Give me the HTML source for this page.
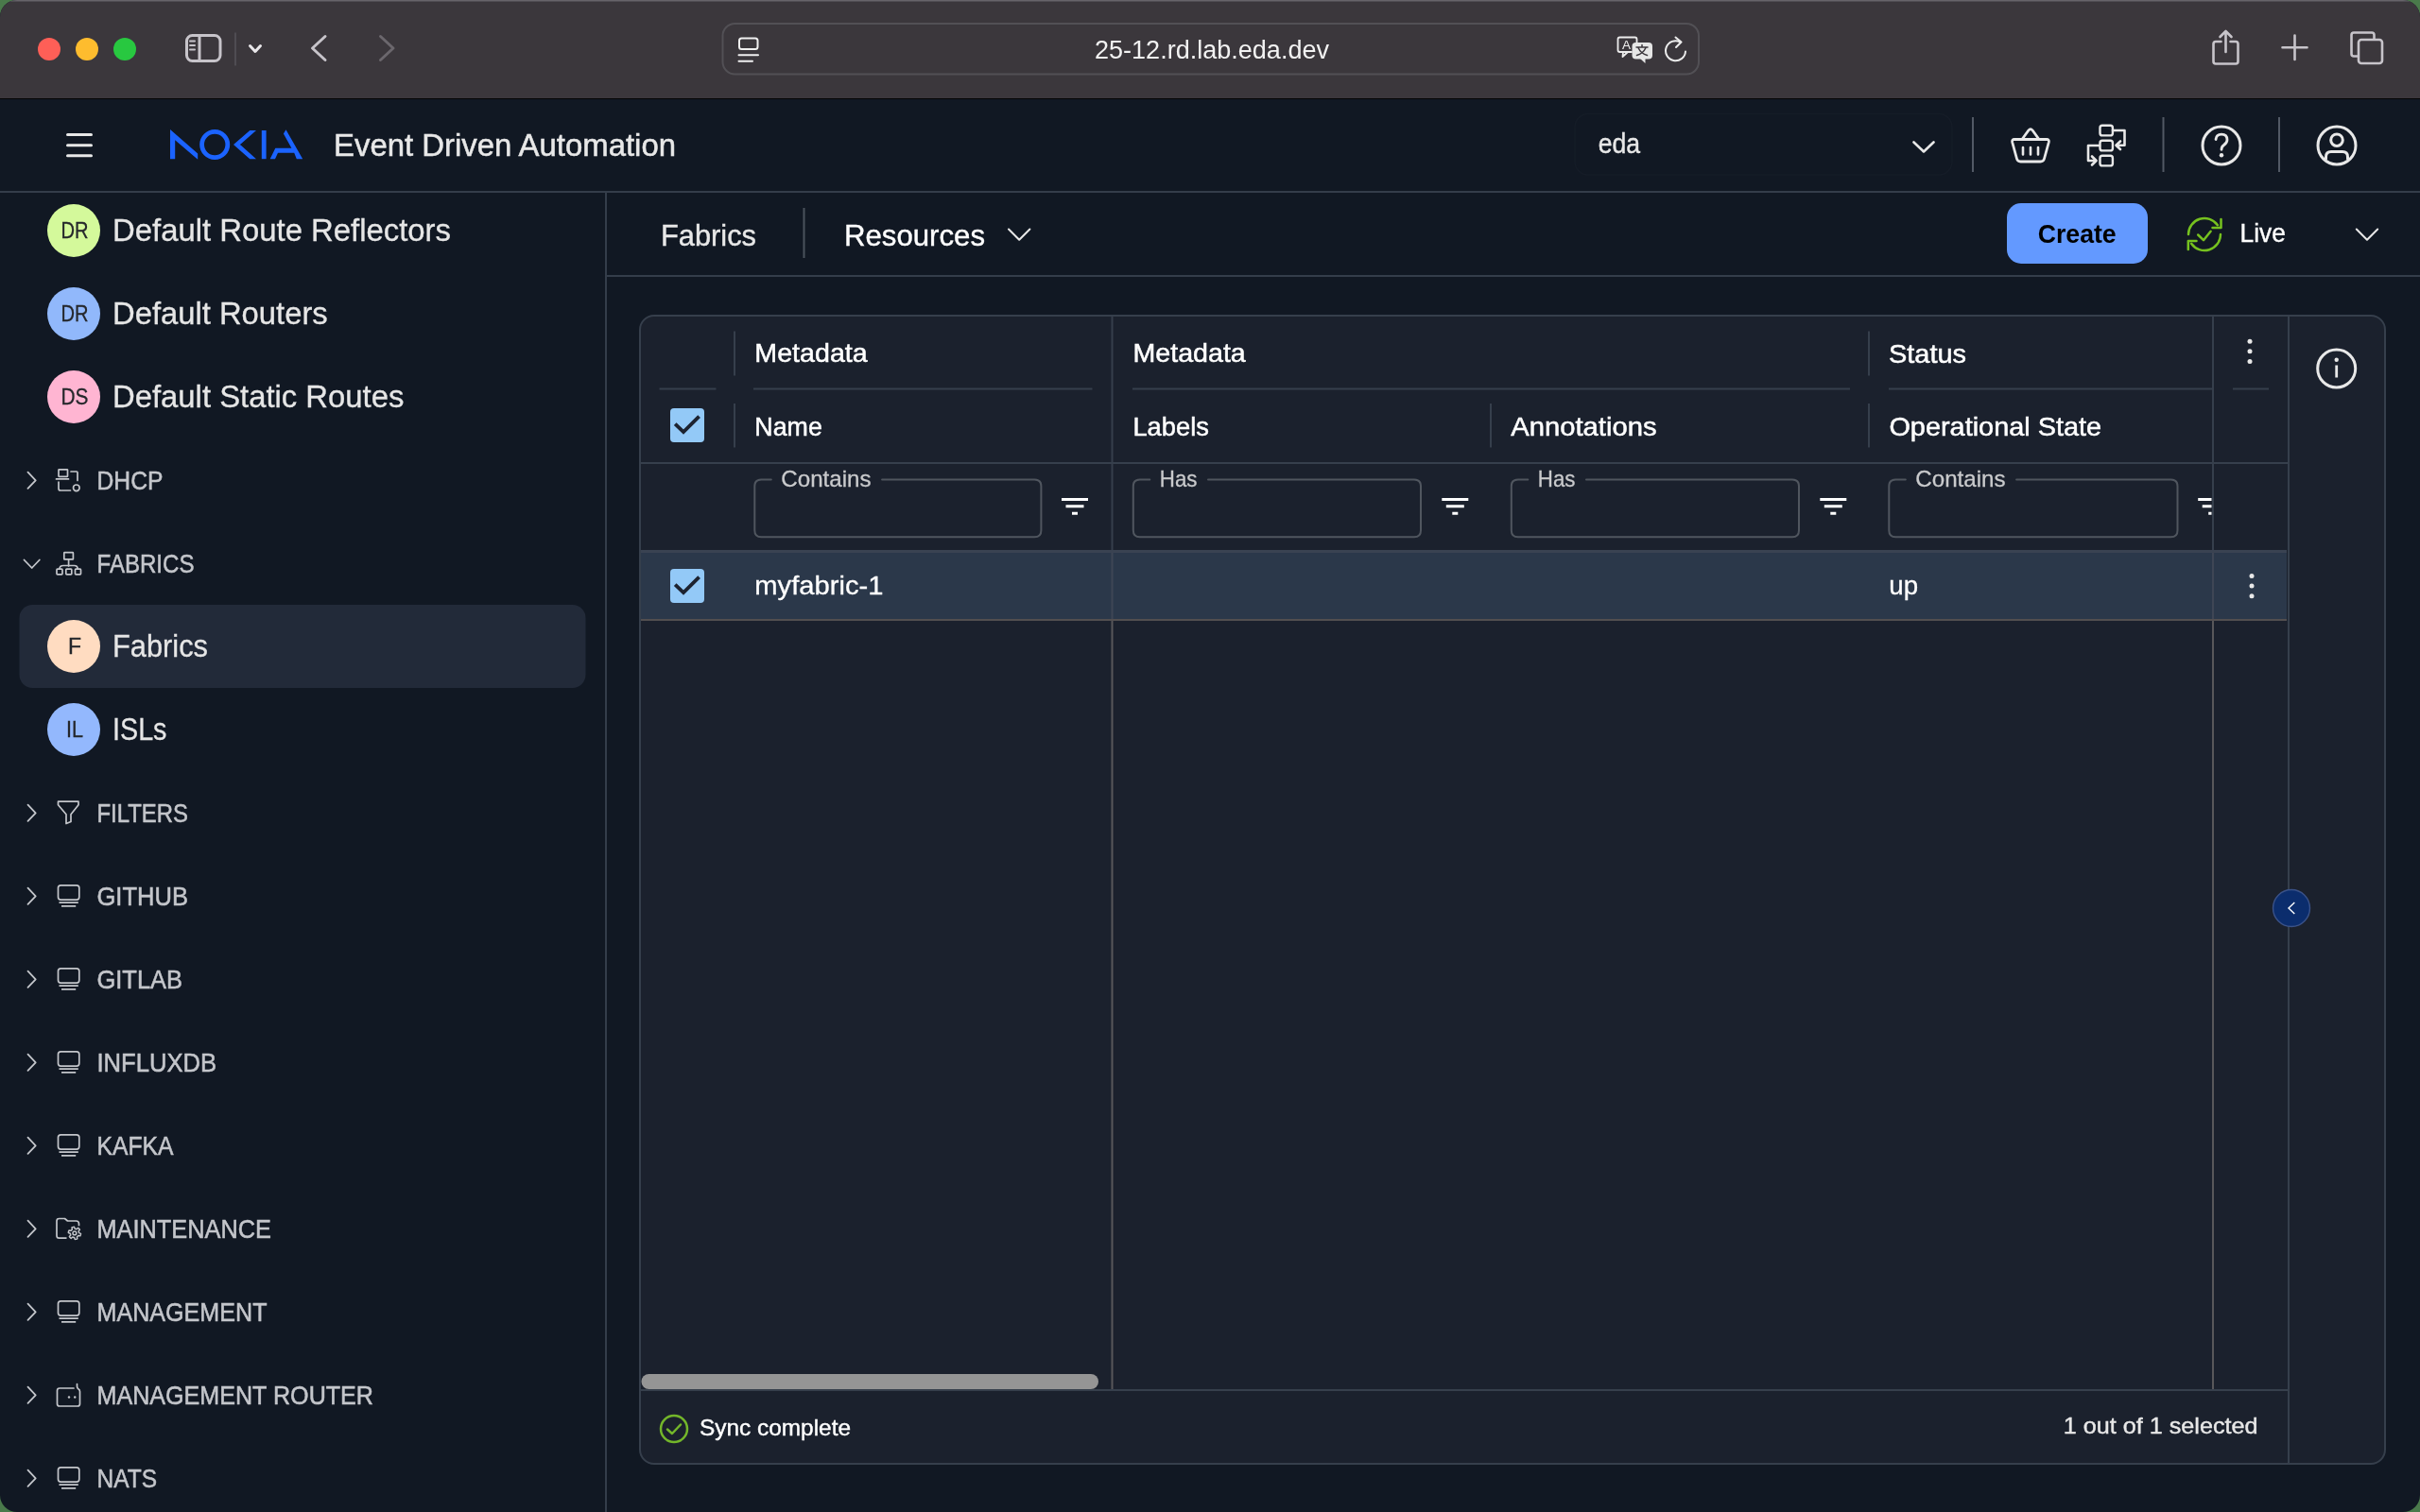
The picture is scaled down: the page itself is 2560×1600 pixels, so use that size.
<!DOCTYPE html>
<html><head><meta charset="utf-8">
<style>
*{margin:0;padding:0}
html,body{width:2560px;height:1600px;overflow:hidden;background:#4a7a4b}
#win{position:absolute;left:0;top:0;width:2560px;height:1600px;border-radius:18px;overflow:hidden;background:#111823}
svg{position:absolute;left:0;top:0;font-family:"Liberation Sans",sans-serif;will-change:transform}
</style></head><body>
<div id="win">
<svg width="2560" height="1600" viewBox="0 0 2560 1600">
<rect x="0" y="0" width="2560" height="104" fill="#3b373c"/>
<rect x="0" y="0" width="2560" height="1.5" fill="#67646a"/>
<rect x="0" y="104" width="2560" height="1" fill="#050505"/>
<circle cx="52" cy="52" r="12" fill="#fe5f57"/>
<circle cx="92" cy="52" r="12" fill="#febc2e"/>
<circle cx="132" cy="52" r="12" fill="#28c840"/>
<rect x="197.5" y="37.5" width="35.5" height="27" fill="none" rx="6" stroke="#c7c4ca" stroke-width="3"/>
<path d="M211 37.5 V64.5" fill="none" stroke="#c7c4ca" stroke-width="3" stroke-linecap="round" stroke-linejoin="round"/>
<path d="M201 43.6 H206 M201 48 H206 M201 52.4 H206" fill="none" stroke="#c7c4ca" stroke-width="2" stroke-linecap="round" stroke-linejoin="round"/>
<path d="M249 34.5 V69.5" fill="none" stroke="#57545a" stroke-width="1.5" stroke-linecap="butt" stroke-linejoin="round"/>
<path d="M264.5 48.5 L270 54.5 L275.5 48.5" fill="none" stroke="#e9e7ea" stroke-width="3" stroke-linecap="round" stroke-linejoin="round"/>
<path d="M344 38.5 L330.5 51 L344 63.5" fill="none" stroke="#c7c4ca" stroke-width="3" stroke-linecap="round" stroke-linejoin="round"/>
<path d="M402.5 38.5 L416 51 L402.5 63.5" fill="none" stroke="#6b676d" stroke-width="3" stroke-linecap="round" stroke-linejoin="round"/>
<rect x="764.5" y="25" width="1032.5" height="53.5" fill="none" rx="13" stroke="#525055" stroke-width="2"/>
<rect x="782" y="40.5" width="19.5" height="11.5" fill="none" rx="2.5" stroke="#f0f0f0" stroke-width="2"/>
<path d="M781.5 58.3 H802 M781.5 64.8 H796" fill="none" stroke="#f0f0f0" stroke-width="2" stroke-linecap="round" stroke-linejoin="round"/>
<text x="1158" y="62" font-size="27" fill="#f2f2f2" textLength="248" lengthAdjust="spacingAndGlyphs">25-12.rd.lab.eda.dev</text>
<path d="M1726 55 H1713.5 Q1711.5 55 1711.5 53 V41.5 Q1711.5 39.5 1713.5 39.5 H1729.5 Q1731.5 39.5 1731.5 41.5 V45 M1717 55 L1716.5 60 L1722 55" fill="none" stroke="#ececec" stroke-width="1.8" stroke-linecap="round" stroke-linejoin="round"/>
<text x="1716" y="52" font-size="12" fill="#ececec" textLength="9" lengthAdjust="spacingAndGlyphs">A</text>
<rect x="1726.5" y="45" width="21.5" height="17.5" fill="#e6e6e6" rx="4"/>
<path d="M1735 62 L1740.5 67 L1740.5 62 Z" fill="#e6e6e6"/>
<path d="M1731 50 H1743 M1737 47.5 V50 M1733 50.5 Q1736 57 1742.5 58.5 M1741 50.5 Q1738 57 1731.5 58.5" fill="none" stroke="#3b373c" stroke-width="1.5" stroke-linecap="round" stroke-linejoin="round"/>
<path d="M1783 54.5 A10.5 10.5 0 1 1 1777.5 44.5" fill="none" stroke="#ececec" stroke-width="2" stroke-linecap="round" stroke-linejoin="round"/>
<path d="M1772.5 39.5 L1778.5 44.5 L1773 50" fill="none" stroke="#ececec" stroke-width="2" stroke-linecap="round" stroke-linejoin="round"/>
<path d="M2349.5 44 H2344 Q2341.5 44 2341.5 46.5 V65 Q2341.5 67.5 2344 67.5 H2365 Q2367.5 67.5 2367.5 65 V46.5 Q2367.5 44 2365 44 H2359.5" fill="none" stroke="#c7c4ca" stroke-width="2.6" stroke-linecap="round" stroke-linejoin="round"/>
<path d="M2354.5 55 V33 M2348.5 39 L2354.5 33 L2360.5 39" fill="none" stroke="#c7c4ca" stroke-width="2.6" stroke-linecap="round" stroke-linejoin="round"/>
<path d="M2427.5 37.5 V63 M2414.5 50.3 H2440.5" fill="none" stroke="#c7c4ca" stroke-width="2.6" stroke-linecap="round" stroke-linejoin="round"/>
<path d="M2494.5 59.5 H2490 Q2487.5 59.5 2487.5 57 V37 Q2487.5 34.5 2490 34.5 H2509 Q2511.5 34.5 2511.5 37 V41.5" fill="none" stroke="#c7c4ca" stroke-width="2.6" stroke-linecap="round" stroke-linejoin="round"/>
<rect x="2495" y="42" width="25" height="25" fill="none" rx="3" stroke="#c7c4ca" stroke-width="2.6"/>
<rect x="0" y="105" width="2560" height="97" fill="#111823"/>
<rect x="0" y="202" width="2560" height="2" fill="#343d4a"/>
<path d="M71.5 142.6 H96.5 M71.5 153.7 H96.5 M71.5 164.8 H96.5" fill="none" stroke="#e8e8e8" stroke-width="3" stroke-linecap="round" stroke-linejoin="round"/>
<path d="M180 137 L209.2 162.4 V168.7 L185.2 148.3 V168.2 H180 Z" fill="#1b63ff"/>
<circle cx="227.2" cy="153" r="13.6" fill="none" stroke="#1b63ff" stroke-width="4.8"/>
<path d="M264.3 138 H271 L253.9 153 L271 168.2 H264.3 L247 153 Z" fill="#1b63ff"/>
<rect x="276.8" y="138" width="4.8" height="30.2" fill="#1b63ff"/>
<path d="M302.5 137.3 L320.2 168.2 H313.8 L311.2 161.7 H294 L291 168.2 H285.7 L291.3 156.8 H308.4 L299.9 141.6 Z" fill="#1b63ff"/>
<text x="353" y="164.5" font-size="33" fill="#e8e8e8" textLength="362" lengthAdjust="spacingAndGlyphs" stroke="#e8e8e8" stroke-width="0.5">Event Driven Automation</text>
<rect x="1666" y="120.5" width="399" height="64.5" fill="none" rx="14" stroke="#151c27" stroke-width="1.5"/>
<text x="1690.7" y="162" font-size="29" fill="#e8e8e8" textLength="44.4" lengthAdjust="spacingAndGlyphs" stroke="#e8e8e8" stroke-width="0.4">eda</text>
<path d="M2024.5 150.5 L2035 160.5 L2045.5 150.5" fill="none" stroke="#e8e8e8" stroke-width="2.6" stroke-linecap="round" stroke-linejoin="round"/>
<rect x="2086" y="124" width="2" height="58" fill="#525965"/>
<rect x="2287.5" y="124" width="2" height="58" fill="#525965"/>
<rect x="2410" y="124" width="2" height="58" fill="#525965"/>
<path d="M2131 147.5 H2165 Q2168 147.5 2167.3 150.5 L2162.5 168 Q2161.7 171 2158.5 171 H2137.5 Q2134.3 171 2133.5 168 L2128.7 150.5 Q2128 147.5 2131 147.5 Z" fill="none" stroke="#e8e8e8" stroke-width="2.8" stroke-linecap="round" stroke-linejoin="round"/>
<path d="M2139 147.5 L2146 137.8 Q2148 135.5 2150 137.8 L2157 147.5" fill="none" stroke="#e8e8e8" stroke-width="2.8" stroke-linecap="round" stroke-linejoin="round"/>
<path d="M2140 156 V163.5 M2148 156 V163.5 M2156 156 V163.5" fill="none" stroke="#e8e8e8" stroke-width="2.6" stroke-linecap="round" stroke-linejoin="round"/>
<rect x="2221.5" y="132.8" width="13.4" height="10.6" fill="none" rx="2.5" stroke="#e8e8e8" stroke-width="2.4"/>
<rect x="2221.5" y="148.8" width="13.4" height="10.6" fill="none" rx="2.5" stroke="#e8e8e8" stroke-width="2.4"/>
<rect x="2221.5" y="164.8" width="13.4" height="10.6" fill="none" rx="2.5" stroke="#e8e8e8" stroke-width="2.4"/>
<path d="M2235 138 H2247.5 V153.7 H2239" fill="none" stroke="#e8e8e8" stroke-width="2.6" stroke-linecap="round" stroke-linejoin="round"/>
<path d="M2243 149.5 L2238.5 153.7 L2243 158" fill="none" stroke="#e8e8e8" stroke-width="2.6" stroke-linecap="round" stroke-linejoin="round"/>
<path d="M2221 154 H2209 V170 H2217" fill="none" stroke="#e8e8e8" stroke-width="2.6" stroke-linecap="round" stroke-linejoin="round"/>
<path d="M2213 165.5 L2217.5 170 L2213 174.5" fill="none" stroke="#e8e8e8" stroke-width="2.6" stroke-linecap="round" stroke-linejoin="round"/>
<circle cx="2350" cy="154" r="20" fill="none" stroke="#e8e8e8" stroke-width="3"/>
<path d="M2344 147.5 Q2344.5 142.2 2350 142.2 Q2356 142.2 2356 148 Q2356 151 2352.5 153.5 Q2350 155.2 2350 158.3" fill="none" stroke="#e8e8e8" stroke-width="2.8" stroke-linecap="round" stroke-linejoin="round"/>
<circle cx="2350" cy="164.2" r="2.2" fill="#e8e8e8"/>
<circle cx="2472" cy="154" r="20" fill="none" stroke="#e8e8e8" stroke-width="3"/>
<circle cx="2472" cy="148.2" r="6.3" fill="none" stroke="#e8e8e8" stroke-width="3"/>
<path d="M2460.5 168 V166 Q2460.5 160.5 2466 160.5 H2478 Q2483.5 160.5 2483.5 166 V168" fill="none" stroke="#e8e8e8" stroke-width="3" stroke-linecap="round" stroke-linejoin="round"/>
<rect x="640" y="204" width="2" height="1396" fill="#343d4a"/>
<rect x="20.5" y="640" width="599" height="88" fill="#222a39" rx="14"/>
<circle cx="78" cy="244" r="28" fill="#d4f99b"/>
<text x="79" y="252" font-size="23" fill="#25272b" textLength="29" lengthAdjust="spacingAndGlyphs" stroke="#25272b" stroke-width="0.3" text-anchor="middle">DR</text>
<text x="119" y="254.5" font-size="33" fill="#e6e6e6" textLength="358" lengthAdjust="spacingAndGlyphs" stroke="#e6e6e6" stroke-width="0.3">Default Route Reflectors</text>
<circle cx="78" cy="332" r="28" fill="#91b8fb"/>
<text x="79" y="340" font-size="23" fill="#25272b" textLength="29" lengthAdjust="spacingAndGlyphs" stroke="#25272b" stroke-width="0.3" text-anchor="middle">DR</text>
<text x="119" y="342.5" font-size="33" fill="#e6e6e6" textLength="227.7" lengthAdjust="spacingAndGlyphs" stroke="#e6e6e6" stroke-width="0.3">Default Routers</text>
<circle cx="78" cy="420" r="28" fill="#ffb5d2"/>
<text x="79" y="428" font-size="23" fill="#25272b" textLength="29" lengthAdjust="spacingAndGlyphs" stroke="#25272b" stroke-width="0.3" text-anchor="middle">DS</text>
<text x="119" y="430.5" font-size="33" fill="#e6e6e6" textLength="308.4" lengthAdjust="spacingAndGlyphs" stroke="#e6e6e6" stroke-width="0.3">Default Static Routes</text>
<circle cx="78" cy="684" r="28" fill="#ffdcc1"/>
<text x="79" y="692" font-size="23" fill="#25272b" stroke="#25272b" stroke-width="0.3" text-anchor="middle">F</text>
<text x="119" y="694.5" font-size="33" fill="#e6e6e6" textLength="101" lengthAdjust="spacingAndGlyphs" stroke="#e6e6e6" stroke-width="0.3">Fabrics</text>
<circle cx="78" cy="772" r="28" fill="#93b8fd"/>
<text x="79" y="780" font-size="23" fill="#25272b" textLength="18" lengthAdjust="spacingAndGlyphs" stroke="#25272b" stroke-width="0.3" text-anchor="middle">IL</text>
<text x="119" y="782.5" font-size="33" fill="#e6e6e6" textLength="57.5" lengthAdjust="spacingAndGlyphs" stroke="#e6e6e6" stroke-width="0.3">ISLs</text>
<text x="102.5" y="518" font-size="28" fill="#c4c6cb" textLength="70" lengthAdjust="spacingAndGlyphs" stroke="#c4c6cb" stroke-width="0.55">DHCP</text>
<path d="M29.5 499.7 L37.7 508.3 L29.5 516.9" fill="none" stroke="#c4c6cb" stroke-width="1.8" stroke-linecap="round" stroke-linejoin="round"/>
<rect x="62" y="496.8" width="9.5" height="7.5" fill="none" rx="0.5" stroke="#c4c6cb" stroke-width="1.7"/>
<path d="M59.5 506.9 H72.5" fill="none" stroke="#c4c6cb" stroke-width="1.7" stroke-linecap="round" stroke-linejoin="round"/>
<path d="M75 499 H81 Q82 499 82 500 V508.5" fill="none" stroke="#c4c6cb" stroke-width="1.7" stroke-linecap="round" stroke-linejoin="round"/>
<path d="M62 510 V517 Q62 519 64 519 H74.5" fill="none" stroke="#c4c6cb" stroke-width="1.7" stroke-linecap="round" stroke-linejoin="round"/>
<circle cx="80.8" cy="516.3" r="3.3" fill="none" stroke="#c4c6cb" stroke-width="1.7"/>
<text x="102.5" y="606" font-size="28" fill="#c4c6cb" textLength="103" lengthAdjust="spacingAndGlyphs" stroke="#c4c6cb" stroke-width="0.55">FABRICS</text>
<path d="M25.5 592.5 L33.7 601 L41.8 592.5" fill="none" stroke="#c4c6cb" stroke-width="1.8" stroke-linecap="round" stroke-linejoin="round"/>
<rect x="67.8" y="584.7" width="9.6" height="7.2" fill="none" rx="0.5" stroke="#c4c6cb" stroke-width="1.7"/>
<path d="M72.6 592 V599" fill="none" stroke="#c4c6cb" stroke-width="1.7" stroke-linecap="round" stroke-linejoin="round"/>
<path d="M63 602 Q63 598.5 67 598.5 H78.5 Q82.2 598.5 82.2 602" fill="none" stroke="#c4c6cb" stroke-width="1.7" stroke-linecap="round" stroke-linejoin="round"/>
<rect x="60" y="602.2" width="6" height="5.6" fill="none" rx="0.8" stroke="#c4c6cb" stroke-width="1.7"/>
<rect x="69.8" y="602.2" width="6" height="5.6" fill="none" rx="0.8" stroke="#c4c6cb" stroke-width="1.7"/>
<rect x="79.5" y="602.2" width="6" height="5.6" fill="none" rx="0.8" stroke="#c4c6cb" stroke-width="1.7"/>
<text x="102.5" y="870" font-size="28" fill="#c4c6cb" textLength="96.5" lengthAdjust="spacingAndGlyphs" stroke="#c4c6cb" stroke-width="0.55">FILTERS</text>
<path d="M29.5 851.7 L37.7 860.3 L29.5 868.9" fill="none" stroke="#c4c6cb" stroke-width="1.8" stroke-linecap="round" stroke-linejoin="round"/>
<path d="M61.5 848.2 H83 V851.8 L75 861.8 V869.5 L70 871.5 V861.8 L61.5 851.8 Z" fill="none" stroke="#c4c6cb" stroke-width="1.7" stroke-linecap="round" stroke-linejoin="round"/>
<text x="102.5" y="958" font-size="28" fill="#c4c6cb" textLength="96.5" lengthAdjust="spacingAndGlyphs" stroke="#c4c6cb" stroke-width="0.55">GITHUB</text>
<path d="M29.5 939.7 L37.7 948.3 L29.5 956.9" fill="none" stroke="#c4c6cb" stroke-width="1.8" stroke-linecap="round" stroke-linejoin="round"/>
<rect x="61.5" y="936.8" width="22.3" height="15.3" fill="none" rx="2.8" stroke="#c4c6cb" stroke-width="1.7"/>
<path d="M62.5 955.2 H82.8 M65 958.9 H80.2" fill="none" stroke="#c4c6cb" stroke-width="1.7" stroke-linecap="butt" stroke-linejoin="round"/>
<text x="102.5" y="1046" font-size="28" fill="#c4c6cb" textLength="90.5" lengthAdjust="spacingAndGlyphs" stroke="#c4c6cb" stroke-width="0.55">GITLAB</text>
<path d="M29.5 1027.7 L37.7 1036.3 L29.5 1044.9" fill="none" stroke="#c4c6cb" stroke-width="1.8" stroke-linecap="round" stroke-linejoin="round"/>
<rect x="61.5" y="1024.8" width="22.3" height="15.3" fill="none" rx="2.8" stroke="#c4c6cb" stroke-width="1.7"/>
<path d="M62.5 1043.2 H82.8 M65 1046.9 H80.2" fill="none" stroke="#c4c6cb" stroke-width="1.7" stroke-linecap="butt" stroke-linejoin="round"/>
<text x="102.5" y="1134" font-size="28" fill="#c4c6cb" textLength="126.7" lengthAdjust="spacingAndGlyphs" stroke="#c4c6cb" stroke-width="0.55">INFLUXDB</text>
<path d="M29.5 1115.7 L37.7 1124.3 L29.5 1132.9" fill="none" stroke="#c4c6cb" stroke-width="1.8" stroke-linecap="round" stroke-linejoin="round"/>
<rect x="61.5" y="1112.8" width="22.3" height="15.3" fill="none" rx="2.8" stroke="#c4c6cb" stroke-width="1.7"/>
<path d="M62.5 1131.2 H82.8 M65 1134.9 H80.2" fill="none" stroke="#c4c6cb" stroke-width="1.7" stroke-linecap="butt" stroke-linejoin="round"/>
<text x="102.5" y="1222" font-size="28" fill="#c4c6cb" textLength="81" lengthAdjust="spacingAndGlyphs" stroke="#c4c6cb" stroke-width="0.55">KAFKA</text>
<path d="M29.5 1203.7 L37.7 1212.3 L29.5 1220.9" fill="none" stroke="#c4c6cb" stroke-width="1.8" stroke-linecap="round" stroke-linejoin="round"/>
<rect x="61.5" y="1200.8" width="22.3" height="15.3" fill="none" rx="2.8" stroke="#c4c6cb" stroke-width="1.7"/>
<path d="M62.5 1219.2 H82.8 M65 1222.9 H80.2" fill="none" stroke="#c4c6cb" stroke-width="1.7" stroke-linecap="butt" stroke-linejoin="round"/>
<text x="102.5" y="1310" font-size="28" fill="#c4c6cb" textLength="184.5" lengthAdjust="spacingAndGlyphs" stroke="#c4c6cb" stroke-width="0.55">MAINTENANCE</text>
<path d="M29.5 1291.7 L37.7 1300.3 L29.5 1308.9" fill="none" stroke="#c4c6cb" stroke-width="1.8" stroke-linecap="round" stroke-linejoin="round"/>
<path d="M83.5 1297.2 V1295 Q83.5 1292 80.5 1292 H71.5 L68.5 1289.5 H62.5 Q60 1289.5 60 1292 V1307.5 Q60 1310.2 62.5 1310.2 H70.5" fill="none" stroke="#c4c6cb" stroke-width="1.7" stroke-linecap="butt" stroke-linejoin="round"/>
<polygon points="85.37,1306.21 85.14,1307.04 84.81,1307.84 82.72,1307.47 82.35,1307.95 81.92,1308.37 81.44,1308.73 81.80,1310.83 81.00,1311.16 80.16,1311.38 79.31,1311.49 78.58,1309.49 77.99,1309.41 77.41,1309.25 76.85,1309.02 75.21,1310.37 74.53,1309.85 73.92,1309.23 73.40,1308.55 74.77,1306.92 74.54,1306.36 74.39,1305.78 74.31,1305.18 72.32,1304.44 72.43,1303.59 72.66,1302.76 72.99,1301.96 75.08,1302.33 75.45,1301.85 75.88,1301.43 76.36,1301.07 76.00,1298.97 76.80,1298.64 77.64,1298.42 78.49,1298.31 79.22,1300.31 79.81,1300.39 80.39,1300.55 80.95,1300.78 82.59,1299.43 83.27,1299.95 83.88,1300.57 84.40,1301.25 83.03,1302.88 83.26,1303.44 83.41,1304.02 83.49,1304.62 85.48,1305.36" fill="none" stroke="#c4c6cb" stroke-width="1.5" stroke-linejoin="round"/>
<circle cx="78.9" cy="1304.9" r="1.9" fill="none" stroke="#c4c6cb" stroke-width="1.5"/>
<text x="102.5" y="1398" font-size="28" fill="#c4c6cb" textLength="180" lengthAdjust="spacingAndGlyphs" stroke="#c4c6cb" stroke-width="0.55">MANAGEMENT</text>
<path d="M29.5 1379.7 L37.7 1388.3 L29.5 1396.9" fill="none" stroke="#c4c6cb" stroke-width="1.8" stroke-linecap="round" stroke-linejoin="round"/>
<rect x="61.5" y="1376.8" width="22.3" height="15.3" fill="none" rx="2.8" stroke="#c4c6cb" stroke-width="1.7"/>
<path d="M62.5 1395.2 H82.8 M65 1398.9 H80.2" fill="none" stroke="#c4c6cb" stroke-width="1.7" stroke-linecap="butt" stroke-linejoin="round"/>
<text x="102.5" y="1486" font-size="28" fill="#c4c6cb" textLength="292.5" lengthAdjust="spacingAndGlyphs" stroke="#c4c6cb" stroke-width="0.55">MANAGEMENT ROUTER</text>
<path d="M29.5 1467.7 L37.7 1476.3 L29.5 1484.9" fill="none" stroke="#c4c6cb" stroke-width="1.8" stroke-linecap="round" stroke-linejoin="round"/>
<path d="M78 1469 H63 Q60.5 1469 60.5 1471.5 V1485.5 Q60.5 1488 63 1488 H82 Q84.5 1488 84.5 1485.5 V1472.5 Q84.5 1470.5 82.5 1469.5 Q81.5 1468.5 81.5 1467 V1464.5" fill="none" stroke="#c4c6cb" stroke-width="1.7" stroke-linecap="round" stroke-linejoin="round"/>
<circle cx="73" cy="1478.5" r="1.2" fill="#c4c6cb"/>
<circle cx="79.2" cy="1478.5" r="1.2" fill="#c4c6cb"/>
<text x="102.5" y="1574" font-size="28" fill="#c4c6cb" textLength="63.5" lengthAdjust="spacingAndGlyphs" stroke="#c4c6cb" stroke-width="0.55">NATS</text>
<path d="M29.5 1555.7 L37.7 1564.3 L29.5 1572.9" fill="none" stroke="#c4c6cb" stroke-width="1.8" stroke-linecap="round" stroke-linejoin="round"/>
<rect x="61.5" y="1552.8" width="22.3" height="15.3" fill="none" rx="2.8" stroke="#c4c6cb" stroke-width="1.7"/>
<path d="M62.5 1571.2 H82.8 M65 1574.9 H80.2" fill="none" stroke="#c4c6cb" stroke-width="1.7" stroke-linecap="butt" stroke-linejoin="round"/>
<rect x="642" y="291" width="1918" height="2" fill="#343d4a"/>
<text x="699" y="260.3" font-size="32" fill="#e8e8e8" textLength="101" lengthAdjust="spacingAndGlyphs" stroke="#e8e8e8" stroke-width="0.4">Fabrics</text>
<rect x="849.5" y="220" width="2" height="53" fill="#4b525d"/>
<text x="893" y="260.3" font-size="32" fill="#ffffff" textLength="149" lengthAdjust="spacingAndGlyphs" stroke="#ffffff" stroke-width="0.4">Resources</text>
<path d="M1067 242.5 L1078.2 253.8 L1089.4 242.5" fill="none" stroke="#e8e8e8" stroke-width="2" stroke-linecap="round" stroke-linejoin="round"/>
<rect x="2123" y="215" width="149" height="64" fill="#6399ff" rx="15"/>
<text x="2155.7" y="256.6" font-size="27" fill="#000000" font-weight="bold" textLength="83" lengthAdjust="spacingAndGlyphs">Create</text>
<path d="M2315 248 A17 17 0 0 1 2345.9 238.2" fill="none" stroke="#76c11f" stroke-width="2.5" stroke-linecap="round" stroke-linejoin="round"/>
<path d="M2349 248 A17 17 0 0 1 2318.1 257.8" fill="none" stroke="#76c11f" stroke-width="2.5" stroke-linecap="round" stroke-linejoin="round"/>
<path d="M2349.5 232 V241 H2340.5" fill="none" stroke="#76c11f" stroke-width="2.5" stroke-linecap="round" stroke-linejoin="round"/>
<path d="M2314.8 264 V255 H2323.5" fill="none" stroke="#76c11f" stroke-width="2.5" stroke-linecap="round" stroke-linejoin="round"/>
<path d="M2325.2 248.5 L2331 254.2 L2338.6 244.7" fill="none" stroke="#76c11f" stroke-width="2.5" stroke-linecap="round" stroke-linejoin="round"/>
<text x="2369.5" y="256.1" font-size="28" fill="#ffffff" textLength="48.3" lengthAdjust="spacingAndGlyphs" stroke="#ffffff" stroke-width="0.4">Live</text>
<path d="M2492.8 242.5 L2504 253.8 L2515.2 242.5" fill="none" stroke="#e8e8e8" stroke-width="2" stroke-linecap="round" stroke-linejoin="round"/>
<rect x="677" y="334" width="1846" height="1215" fill="#1b212d" rx="15" stroke="#363f4c" stroke-width="2"/>
<rect x="1175.5" y="335" width="2" height="250" fill="#363f4c"/>
<rect x="2340" y="335" width="2" height="250" fill="#363f4c"/>
<rect x="2420" y="335" width="2" height="250" fill="#363f4c"/>
<rect x="2420" y="585" width="2" height="963" fill="#363f4c"/>
<rect x="1175.5" y="657" width="2" height="813" fill="#58575a"/>
<rect x="2340" y="657" width="2" height="813" fill="#58575a"/>
<rect x="1175.5" y="585" width="2" height="70" fill="#3e4655"/>
<rect x="2340" y="585" width="2" height="70" fill="#3e4655"/>
<rect x="776" y="350.5" width="2" height="47" fill="#363f4c"/>
<rect x="1976" y="350.5" width="2" height="47" fill="#363f4c"/>
<rect x="776" y="427" width="2" height="46.5" fill="#363f4c"/>
<rect x="1576" y="427" width="2" height="46.5" fill="#363f4c"/>
<rect x="1976" y="427" width="2" height="46.5" fill="#363f4c"/>
<rect x="697.5" y="410.5" width="60.0" height="2" fill="#363f4c"/>
<rect x="797" y="410.5" width="358.5" height="2" fill="#363f4c"/>
<rect x="1198" y="410.5" width="759" height="2" fill="#363f4c"/>
<rect x="1998" y="410.5" width="342" height="2" fill="#363f4c"/>
<rect x="2362" y="410.5" width="38" height="2" fill="#363f4c"/>
<rect x="678" y="489" width="1742" height="2" fill="#363f4c"/>
<text x="798.3" y="383.2" font-size="28" fill="#ffffff" textLength="119.4" lengthAdjust="spacingAndGlyphs" stroke="#ffffff" stroke-width="0.5">Metadata</text>
<text x="1198.4" y="383.2" font-size="28" fill="#ffffff" textLength="119.4" lengthAdjust="spacingAndGlyphs" stroke="#ffffff" stroke-width="0.5">Metadata</text>
<text x="1998" y="383.5" font-size="28" fill="#ffffff" textLength="82" lengthAdjust="spacingAndGlyphs" stroke="#ffffff" stroke-width="0.5">Status</text>
<text x="798.3" y="461" font-size="28" fill="#ffffff" textLength="71.5" lengthAdjust="spacingAndGlyphs" stroke="#ffffff" stroke-width="0.5">Name</text>
<text x="1198.4" y="461" font-size="28" fill="#ffffff" textLength="80.5" lengthAdjust="spacingAndGlyphs" stroke="#ffffff" stroke-width="0.5">Labels</text>
<text x="1598.2" y="461" font-size="28" fill="#ffffff" textLength="154.4" lengthAdjust="spacingAndGlyphs" stroke="#ffffff" stroke-width="0.5">Annotations</text>
<text x="1998.4" y="461" font-size="28" fill="#ffffff" textLength="224.8" lengthAdjust="spacingAndGlyphs" stroke="#ffffff" stroke-width="0.5">Operational State</text>
<circle cx="2380" cy="361.2" r="2.5" fill="#e8e8e8"/>
<circle cx="2380" cy="371.8" r="2.5" fill="#e8e8e8"/>
<circle cx="2380" cy="382.6" r="2.5" fill="#e8e8e8"/>
<circle cx="2471.7" cy="390" r="20" fill="none" stroke="#e8e8e8" stroke-width="3"/>
<circle cx="2471.7" cy="380.8" r="2.2" fill="#e8e8e8"/>
<rect x="2470.3" y="386.5" width="2.8" height="13" fill="#e8e8e8"/>
<rect x="709" y="432" width="36" height="36" fill="#93c9f7" rx="4"/>
<path d="M714.2 448.6 L723 457.2 L739.6 440.6" fill="none" stroke="#1d2330" stroke-width="3.8" stroke-linecap="butt" stroke-linejoin="miter"/>
<path d="M815.8 507.5 H805.3 Q798.3 507.5 798.3 514.5 V561.2 Q798.3 568.2 805.3 568.2 H1094.4 Q1101.4 568.2 1101.4 561.2 V514.5 Q1101.4 507.5 1094.4 507.5 H933.0999999999999" fill="none" stroke="#50565f" stroke-width="2" stroke-linecap="round" stroke-linejoin="round"/>
<text x="826.3" y="514.6" font-size="24" fill="#c9cacc" textLength="95.3" lengthAdjust="spacingAndGlyphs" stroke="#c9cacc" stroke-width="0.3">Contains</text>
<path d="M1123 528.5 H1151 M1127.5 535.8 H1146.5 M1134 543.2 H1140" fill="none" stroke="#ffffff" stroke-width="3" stroke-linecap="butt" stroke-linejoin="round"/>
<path d="M1216.3 507.5 H1205.8 Q1198.8 507.5 1198.8 514.5 V561.2 Q1198.8 568.2 1205.8 568.2 H1496 Q1503 568.2 1503 561.2 V514.5 Q1503 507.5 1496 507.5 H1278.0" fill="none" stroke="#50565f" stroke-width="2" stroke-linecap="round" stroke-linejoin="round"/>
<text x="1226.8" y="514.6" font-size="24" fill="#c9cacc" textLength="39.7" lengthAdjust="spacingAndGlyphs" stroke="#c9cacc" stroke-width="0.3">Has</text>
<path d="M1525.3 528.5 H1553.3 M1529.8 535.8 H1548.8 M1536.3 543.2 H1542.3" fill="none" stroke="#ffffff" stroke-width="3" stroke-linecap="butt" stroke-linejoin="round"/>
<path d="M1616.3 507.5 H1605.8 Q1598.8 507.5 1598.8 514.5 V561.2 Q1598.8 568.2 1605.8 568.2 H1896 Q1903 568.2 1903 561.2 V514.5 Q1903 507.5 1896 507.5 H1678.0" fill="none" stroke="#50565f" stroke-width="2" stroke-linecap="round" stroke-linejoin="round"/>
<text x="1626.8" y="514.6" font-size="24" fill="#c9cacc" textLength="39.7" lengthAdjust="spacingAndGlyphs" stroke="#c9cacc" stroke-width="0.3">Has</text>
<path d="M1925.3 528.5 H1953.3 M1929.8 535.8 H1948.8 M1936.3 543.2 H1942.3" fill="none" stroke="#ffffff" stroke-width="3" stroke-linecap="butt" stroke-linejoin="round"/>
<path d="M2015.8 507.5 H2005.3 Q1998.3 507.5 1998.3 514.5 V561.2 Q1998.3 568.2 2005.3 568.2 H2296.5 Q2303.5 568.2 2303.5 561.2 V514.5 Q2303.5 507.5 2296.5 507.5 H2133.1" fill="none" stroke="#50565f" stroke-width="2" stroke-linecap="round" stroke-linejoin="round"/>
<text x="2026.3" y="514.6" font-size="24" fill="#c9cacc" textLength="95.3" lengthAdjust="spacingAndGlyphs" stroke="#c9cacc" stroke-width="0.3">Contains</text>
<clipPath id="fc"><rect x="2300" y="520" width="39.5" height="30"/></clipPath>
<g clip-path="url(#fc)">
<path d="M2325.2 528.5 H2353.2 M2329.7 535.8 H2348.7 M2336.2 543.2 H2342.2" fill="none" stroke="#ffffff" stroke-width="3" stroke-linecap="butt" stroke-linejoin="round"/>
</g>
<rect x="678" y="582" width="1741" height="3" fill="#3a4352"/>
<rect x="678" y="585" width="1741" height="70" fill="#2b384a"/>
<rect x="678" y="655" width="1741" height="2" fill="#524f50"/>
<rect x="1175.5" y="585" width="2" height="70" fill="#3e4655"/>
<rect x="2340" y="585" width="2" height="70" fill="#3e4655"/>
<rect x="709" y="602" width="36" height="36" fill="#93c9f7" rx="4"/>
<path d="M714.2 618.6 L723 627.2 L739.6 610.6" fill="none" stroke="#1d2330" stroke-width="3.8" stroke-linecap="butt" stroke-linejoin="miter"/>
<text x="798.3" y="628.9" font-size="28" fill="#ffffff" textLength="136.2" lengthAdjust="spacingAndGlyphs" stroke="#ffffff" stroke-width="0.3">myfabric-1</text>
<text x="1998.3" y="628.9" font-size="28" fill="#ffffff" textLength="30.8" lengthAdjust="spacingAndGlyphs" stroke="#ffffff" stroke-width="0.3">up</text>
<circle cx="2382" cy="609.5" r="2.5" fill="#e8e8e8"/>
<circle cx="2382" cy="620" r="2.5" fill="#e8e8e8"/>
<circle cx="2382" cy="630.7" r="2.5" fill="#e8e8e8"/>
<circle cx="2424" cy="961" r="19.5" fill="#0b2d6d" stroke="#3a5289" stroke-width="1.4"/>
<path d="M2427.3 955 L2421 961 L2427.3 967" fill="none" stroke="#ffffff" stroke-width="1.4" stroke-linecap="butt" stroke-linejoin="miter"/>
<rect x="678.5" y="1454" width="483.5" height="16" fill="#959595" rx="8"/>
<rect x="678" y="1470" width="1743" height="2" fill="#363f4c"/>
<circle cx="713" cy="1512" r="14" fill="none" stroke="#73b62a" stroke-width="2.5"/>
<path d="M706 1512.5 L711 1517 L720 1507.5" fill="none" stroke="#73b62a" stroke-width="2.5" stroke-linecap="round" stroke-linejoin="round"/>
<text x="740" y="1518.6" font-size="24" fill="#ffffff" textLength="160" lengthAdjust="spacingAndGlyphs" stroke="#ffffff" stroke-width="0.4">Sync complete</text>
<text x="2182.8" y="1517" font-size="24" fill="#e8e8e8" textLength="205.7" lengthAdjust="spacingAndGlyphs" stroke="#e8e8e8" stroke-width="0.4">1 out of 1 selected</text>
</svg>
</div>
</body></html>
